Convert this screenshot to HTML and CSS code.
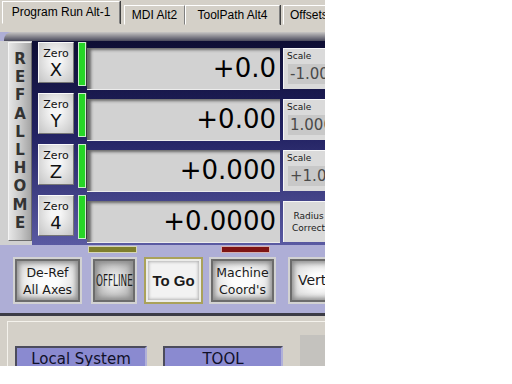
FILE: index.html
```html
<!DOCTYPE html>
<html>
<head>
	<title>Program Run</title>
	<link rel="stylesheet" href="styles.css">
</head>
<body>
	<div class="screen">
		<div class="tabs">
			<div class="tab active">Program Run Alt-1</div>
			<div class="tab tab-mdi">MDI Alt2</div>
			<div class="tab tab-path">ToolPath Alt4</div>
			<div class="tab tab-offsets">Offsets Alt5</div>
		</div>

		<div class="panel">
			<div class="panel-shade"></div>

			<div class="dro-area">
				<div class="ref-col">
					<div class="ref-btn">
						<span>R</span><span>E</span><span>F</span><span>A</span><span>L</span>
						<span>L</span><span>H</span><span>O</span><span>M</span><span>E</span>
					</div>
				</div>

				<div class="rows">
					<div class="row">
						<div class="zero-btn"><span class="zero-word">Zero</span><span class="zero-axis">X</span></div>
						<div class="led"></div>
						<div class="dro">+0.0</div>
						<div class="scale"><span class="scale-label">Scale</span><span class="scale-value">-1.0000</span></div>
					</div>
					<div class="row">
						<div class="zero-btn"><span class="zero-word">Zero</span><span class="zero-axis">Y</span></div>
						<div class="led"></div>
						<div class="dro">+0.00</div>
						<div class="scale"><span class="scale-label">Scale</span><span class="scale-value">1.0000</span></div>
					</div>
					<div class="row">
						<div class="zero-btn"><span class="zero-word">Zero</span><span class="zero-axis">Z</span></div>
						<div class="led"></div>
						<div class="dro">+0.000</div>
						<div class="scale"><span class="scale-label">Scale</span><span class="scale-value">+1.0000</span></div>
					</div>
					<div class="row">
						<div class="zero-btn"><span class="zero-word">Zero</span><span class="zero-axis">4</span></div>
						<div class="led"></div>
						<div class="dro">+0.0000</div>
						<div class="scale radius"><span>Radius</span><span>Correct</span></div>
					</div>
				</div>
			</div>

			<div class="indicators">
				<div class="ind ind-olive"></div>
				<div class="ind ind-red"></div>
			</div>

			<div class="buttons">
				<div class="btn btn-deref"><span>De-Ref</span><span>All Axes</span></div>
				<div class="btn btn-offline"><span class="offline-text">OFFLINE</span></div>
				<div class="btn btn-togo">To Go</div>
				<div class="btn btn-machine"><span>Machine</span><span>Coord's</span></div>
				<div class="btn btn-vert">Vert</div>
			</div>
		</div>

		<div class="lower">
			<div class="group">
				<div class="sys-btn sys-local">Local System</div>
				<div class="sys-btn sys-tool">TOOL</div>
				<div class="gray-box"></div>
			</div>
		</div>
	</div>
</body>
</html>
```

FILE: styles.css
```css
body {
	margin: 0;
	background: #fff;
}

.screen {
	width: 325px;
	height: 366px;
	overflow: hidden;
	background: #d4d0c8;
	font-family: "DejaVu Sans", Verdana, sans-serif;
	color: #000;
}

/* tab strip */
.tabs {
	display: flex;
	align-items: flex-start;
	height: 32px;
	padding-left: 2px;
	font-family: "Liberation Sans", Arial, sans-serif;
	font-size: 12px;
}

.tab {
	flex-shrink: 0;
	box-sizing: border-box;
	margin-top: 5px;
	height: 20px;
	line-height: 18px;
	text-align: center;
	white-space: nowrap;
	overflow: hidden;
	border: 1px solid;
	border-color: #fff #808080 #d4d0c8 #fff;
	box-shadow: 1px 0 0 #404040;
}

.tab.active {
	width: 118px;
	margin-top: 1px;
	margin-right: 4px;
	height: 23px;
	line-height: 21px;
}

.tab-mdi {
	width: 61px;
}

.tab-path {
	width: 95px;
}

.tab-offsets {
	width: 80px;
	margin-left: 3px;
	text-align: left;
	padding-left: 6px;
}

/* DRO panel */
.panel {
	height: 281px;
	background: #aeaed6;
	border-bottom: 3px solid #3c3c46;
}

.panel-shade {
	height: 9px;
	margin-left: 4px;
	border-top-left-radius: 8px;
	background: linear-gradient(#c8c6c4, #4a4a5c);
}

.dro-area {
	display: flex;
	height: 204px;
}

.ref-col {
	width: 32px;
	flex-shrink: 0;
	background: #d0d0d0;
	padding-top: 1px;
	box-sizing: border-box;
}

.ref-btn {
	box-sizing: border-box;
	margin-left: 8px;
	width: 24px;
	height: 199px;
	padding-top: 7px;
	display: flex;
	flex-direction: column;
	align-items: center;
	border: 1px solid;
	border-color: #f4f4f4 #6c6c6c #6c6c6c #f4f4f4;
	background: linear-gradient(90deg, #e6e6e6, #c6c6c6 55%, #a4a4a4);
	font-size: 15px;
	font-weight: bold;
	line-height: 18.2px;
	color: #333;
}

.rows {
	flex: 1;
	padding-left: 6px;
	background: linear-gradient(#0e0e34, #222262 45%, #5a5aa2 100%);
}

.row {
	display: flex;
	align-items: flex-start;
	height: 51px;
}

.zero-btn {
	flex-shrink: 0;
	box-sizing: border-box;
	width: 36px;
	height: 41px;
	margin-top: 1px;
	padding-top: 5px;
	display: flex;
	flex-direction: column;
	align-items: center;
	border: 1px solid;
	border-color: #fafafa #767676 #767676 #fafafa;
	background: radial-gradient(ellipse at 50% 45%, #f6f6f6 20%, #c4c4c4 100%);
	color: #111;
}

.zero-word {
	font-size: 11px;
	line-height: 12px;
}

.zero-axis {
	font-size: 18px;
	line-height: 20px;
}

.led {
	flex-shrink: 0;
	box-sizing: border-box;
	width: 8px;
	height: 44px;
	margin: 1px 0 0 4px;
	background: #26d626;
	border: 1px solid #c8f0c8;
	box-shadow: 1px 0 0 #3a3a3a;
}

.dro {
	flex-shrink: 0;
	box-sizing: border-box;
	width: 193px;
	height: 42px;
	margin: 7px 0 0 1px;
	padding-right: 4px;
	background: #d2d2d2;
	border-bottom: 1px solid #ececec;
	box-shadow: inset 6px 4px 3px -2px rgba(0, 0, 0, 0.5);
	text-align: right;
	font-size: 26px;
	line-height: 41px;
}

.scale {
	flex-shrink: 0;
	box-sizing: border-box;
	width: 50px;
	height: 41px;
	margin: 7px 0 0 3px;
	padding: 2px 0 0 3px;
	background: #dadada;
	border-top: 1px solid #f6f6f6;
	border-left: 1px solid #f6f6f6;
}

.scale-label {
	display: block;
	font-size: 9px;
	line-height: 11px;
	color: #1a1a1a;
}

.scale-value {
	display: block;
	height: 20px;
	margin: 2px 0 0 1px;
	padding-left: 2px;
	background: #c8c8c8;
	font-size: 15px;
	line-height: 20px;
	color: #4a4a4a;
	white-space: nowrap;
	overflow: hidden;
}

.radius {
	padding: 0;
	display: flex;
	flex-direction: column;
	align-items: center;
	justify-content: center;
	font-size: 9px;
	line-height: 12px;
	color: #1a1a1a;
}

/* indicator bars */
.indicators {
	display: flex;
	height: 12px;
}

.ind {
	box-sizing: border-box;
	width: 49px;
	height: 7px;
	margin-top: 1px;
}

.ind-olive {
	margin-left: 88px;
	background: #7e7e2c;
	border: 1px solid #d6d6b4;
}

.ind-red {
	margin-left: 84px;
	background: #7e1414;
	border: 1px solid #d4aeae;
}

/* button row */
.buttons {
	display: flex;
	align-items: flex-start;
	height: 47px;
	padding-top: 2px;
	box-sizing: border-box;
}

.btn {
	flex-shrink: 0;
	box-sizing: border-box;
	height: 43px;
	display: flex;
	flex-direction: column;
	align-items: center;
	justify-content: center;
	border: 2px solid #6c6c6c;
	box-shadow: 0 0 0 2px #d2d2d2, inset 0 0 5px 2px #8c8c8c;
	background: radial-gradient(ellipse at center, #fcfcfc 25%, #cecece 100%);
	font-size: 12.5px;
	line-height: 17px;
	color: #1a1a1a;
	white-space: nowrap;
	overflow: hidden;
}

.btn-deref {
	width: 65px;
	margin-left: 15px;
}

.btn-offline {
	width: 42px;
	margin-left: 13px;
	background: radial-gradient(ellipse at center, #f0f0f0 10%, #a4a4a4 90%);
}

.offline-text {
	display: inline-block;
	font-size: 16px;
	transform: scaleX(0.55);
}

.btn-togo {
	width: 55px;
	margin-left: 11px;
	border-color: #ececea;
	box-shadow: 0 0 0 2px #aaa25a, inset 0 0 3px 1px #b4b4b4;
	background: #f2f2f2;
	font-family: "Liberation Sans", Arial, sans-serif;
	font-weight: bold;
	font-size: 15px;
}

.btn-machine {
	width: 63px;
	margin-left: 10px;
}

.btn-vert {
	width: 60px;
	margin-left: 16px;
	align-items: flex-start;
	padding-left: 6px;
	font-size: 14px;
}

/* lower panel */
.lower {
	height: 53px;
	padding: 5px 0 0 7px;
	box-sizing: border-box;
}

.group {
	display: flex;
	align-items: flex-start;
	height: 100%;
	padding: 24px 0 0 7px;
	box-sizing: border-box;
	border-top: 1px solid #f4f2ec;
	border-left: 1px solid #f4f2ec;
}

.sys-btn {
	flex-shrink: 0;
	box-sizing: border-box;
	height: 30px;
	padding-top: 1px;
	border: 2px solid;
	border-color: #4c4c5c #b0b0d8 #b0b0d8 #4c4c5c;
	background: #8a8ad0;
	font-size: 15px;
	line-height: 20px;
	text-align: center;
	color: #101028;
}

.sys-local {
	width: 132px;
}

.sys-tool {
	width: 120px;
	margin-left: 16px;
}

.gray-box {
	flex-shrink: 0;
	width: 40px;
	height: 40px;
	margin: -11px 0 0 17px;
	background: #c4c2be;
}
```
